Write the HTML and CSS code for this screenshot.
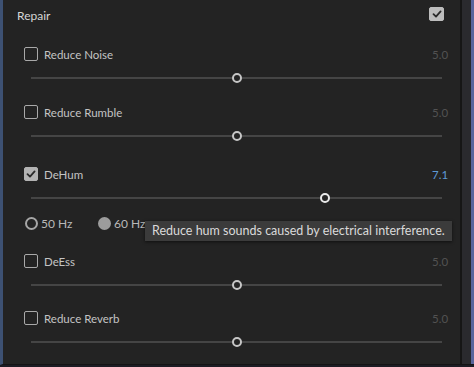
FILE: index.html
```html
<!DOCTYPE html>
<html lang="en">
<head>
    <meta charset="UTF-8">
    <meta name="viewport" content="width=device-width, initial-scale=1.0">
    <title>Repair</title>
    <link rel="stylesheet" href="styles.css">
</head>
<body>
    <div class="frame">
        <div class="panel">
            <div class="header">
                <span class="title">Repair</span>
                <span class="check solid on">
                    <svg viewBox="0 0 14 14"><path d="M3.5 7.2 L6 9.6 L10.6 4.4" /></svg>
                </span>
            </div>

            <div class="effect">
                <div class="label-row">
                    <span class="check"></span>
                    <span class="name">Reduce Noise</span>
                    <span class="value">5.0</span>
                </div>
                <div class="slider"><div class="track"></div><div class="thumb" style="left: 50%"></div></div>
            </div>

            <div class="effect">
                <div class="label-row">
                    <span class="check"></span>
                    <span class="name">Reduce Rumble</span>
                    <span class="value">5.0</span>
                </div>
                <div class="slider"><div class="track"></div><div class="thumb" style="left: 50%"></div></div>
            </div>

            <div class="effect dehum">
                <div class="label-row">
                    <span class="check solid">
                        <svg viewBox="0 0 14 14"><path d="M3.5 7.2 L6 9.6 L10.6 4.4" /></svg>
                    </span>
                    <span class="name">DeHum</span>
                    <span class="value active">7.1</span>
                </div>
                <div class="slider"><div class="track"></div><div class="thumb hot" style="left: 71.5%"></div></div>
                <div class="radios">
                    <span class="radio"></span><span class="hz">50 Hz</span>
                    <span class="radio picked"></span><span class="hz">60 Hz</span>
                    <div class="tooltip">Reduce hum sounds caused by electrical interference.</div>
                </div>
            </div>

            <div class="effect deess">
                <div class="label-row">
                    <span class="check"></span>
                    <span class="name">DeEss</span>
                    <span class="value">5.0</span>
                </div>
                <div class="slider"><div class="track"></div><div class="thumb" style="left: 50%"></div></div>
            </div>

            <div class="effect reverb">
                <div class="label-row">
                    <span class="check"></span>
                    <span class="name">Reduce Reverb</span>
                    <span class="value">5.0</span>
                </div>
                <div class="slider"><div class="track"></div><div class="thumb" style="left: 50%"></div></div>
            </div>
        </div>
        <div class="scrollbar"></div>
    </div>
</body>
</html>
```

FILE: styles.css
```css
body {
    margin: 0;
    background-color: #1c1c24;
    font-family: 'Lato', 'Open Sans', sans-serif;
    height: 367px;
    overflow: hidden;
}

.frame {
    display: flex;
    height: 364px;
    border-left: 3px solid #3d5173;
    border-bottom: 1px solid #141414;
}

.panel {
    width: 460px;
    background-color: #232323;
    border-right: 2px solid #161616;
}

.scrollbar {
    width: 9px;
    background-color: #2a2a2e;
    border-right: 3px solid #5a659c;
}

.header {
    display: flex;
    align-items: center;
    justify-content: space-between;
    height: 31px;
    padding: 0 16px 0 14px;
}

.title {
    color: #d6d6d6;
    font-size: 12px;
}

.check {
    box-sizing: border-box;
    width: 14px;
    height: 14px;
    border: 1.5px solid #a9a9a9;
    border-radius: 2px;
    display: flex;
    align-items: center;
    justify-content: center;
}

.check.solid {
    background-color: #b3b3b3;
    border-color: #b3b3b3;
}

.check.on {
    width: 15px;
    height: 14px;
    background-color: #bdbdbd;
    border-color: #bdbdbd;
    margin-top: -3px;
}

.check svg {
    width: 14px;
    height: 14px;
    flex-shrink: 0;
}

.check path {
    fill: none;
    stroke: #2a2a2a;
    stroke-width: 1.8;
    stroke-linecap: round;
    stroke-linejoin: round;
}

.effect {
    padding: 0 14px 0 21px;
    margin-top: 12px;
}

.effect:first-of-type {
    margin-top: 13px;
}

.effect.dehum {
    margin-top: 16px;
}

.effect.deess {
    margin-top: 17px;
}

.effect.reverb {
    margin-top: 11px;
}

.label-row {
    display: flex;
    align-items: center;
    height: 22px;
}

.name {
    color: #c4c4c4;
    font-size: 11.5px;
    margin-left: 6px;
}

.value {
    margin-left: auto;
    margin-right: -2px;
    color: #525252;
    font-size: 11.5px;
}

.value.active {
    color: #5e9ad6;
}

.slider {
    position: relative;
    height: 24px;
    margin: 0 4px 0 7px;
}

.track {
    position: absolute;
    left: 0;
    right: 0;
    top: 12px;
    height: 2px;
    background-color: #454545;
}

.thumb {
    position: absolute;
    top: 8px;
    width: 10px;
    height: 10px;
    margin-left: -5px;
    box-sizing: border-box;
    border: 2px solid #c6c6c6;
    border-radius: 50%;
    background-color: #232323;
}

.thumb.hot {
    border-color: #e8e8e8;
}

.radios {
    position: relative;
    display: flex;
    align-items: center;
    height: 20px;
    margin-top: 4px;
}

.radio {
    box-sizing: border-box;
    width: 13px;
    height: 13px;
    border: 2px solid #a6a6a6;
    border-radius: 50%;
    margin-left: 1px;
}

.radio.picked {
    background-color: #9c9c9c;
    border-color: #9c9c9c;
    margin-left: 0;
}

.hz {
    color: #b9b9b9;
    font-size: 12px;
    margin-left: 3px;
    width: 57px;
}

.tooltip {
    position: absolute;
    left: 121px;
    top: 8px;
    width: 307px;
    height: 20px;
    box-sizing: border-box;
    padding-left: 7px;
    line-height: 20px;
    white-space: nowrap;
    background-color: #3b3b3b;
    color: #dadada;
    font-size: 12.5px;
    box-shadow: 0 1px 3px rgba(0, 0, 0, 0.6);
}
```
